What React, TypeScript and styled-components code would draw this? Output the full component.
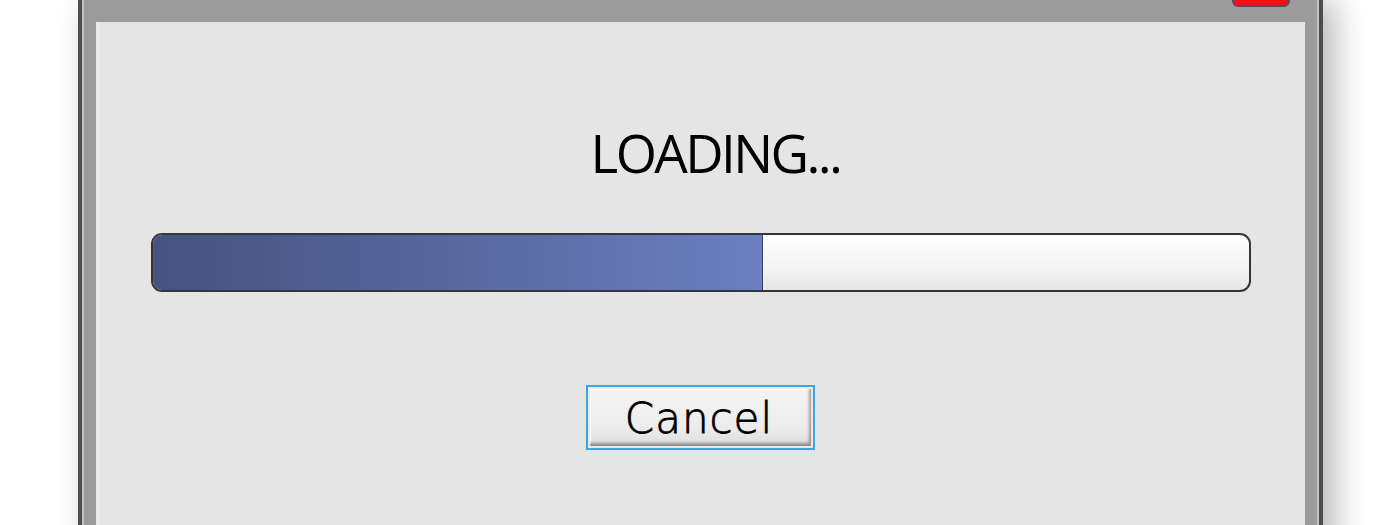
import React from "react";
import styled, { createGlobalStyle } from "styled-components";

const Global = createGlobalStyle`
  html, body { margin: 0; padding: 0; background: #ffffff; }
  body { width: 1400px; height: 525px; overflow: hidden; }
`;

const Page = styled.div`
  display: flex;
  padding-left: 78px;
  height: 525px;
  overflow: hidden;
`;

const Window = styled.div`
  position: relative;
  width: 1245px;
  height: 560px;
  box-sizing: border-box;
  background: #9b9b9b;
  border: 4px solid #4d4d4d;
  border-top: none;
  padding: 0 14px;
  display: flex;
  flex-direction: column;
  box-shadow: inset 2px 0 0 #c4c4c4, inset -2px 0 0 #c4c4c4, 12px 0 30px rgba(0, 0, 0, 0.28);
`;

const TitleBar = styled.div`
  height: 22px;
  flex: none;
  display: flex;
  justify-content: flex-end;
  align-items: flex-start;
  padding-right: 15px;
`;

const CloseButton = styled.div`
  width: 58px;
  height: 12px;
  margin-top: -5px;
  box-sizing: border-box;
  background: #ee1212;
  border: 2px solid #4f5158;
  border-radius: 0 0 6px 6px;
`;

const Content = styled.div`
  flex: 1;
  background: #e5e5e5;
  box-shadow: inset 4px 0 0 #ebebeb;
  display: flex;
  flex-direction: column;
  align-items: center;
`;

const Title = styled.div`
  margin-top: 104px;
  padding-left: 30px;
  font-family: "Open Sans", sans-serif;
  font-size: 53px;
  letter-spacing: -2.6px;
  line-height: 1;
  color: #000;
`;

const Track = styled.div`
  margin-top: 54px;
  width: 1100px;
  height: 59px;
  box-sizing: border-box;
  border: 2px solid #363636;
  border-radius: 11px;
  overflow: hidden;
  display: flex;
  background: linear-gradient(to bottom, #ffffff 0%, #f3f3f3 60%, #e6e6e6 100%);
`;

const Fill = styled.div`
  height: 100%;
  background: linear-gradient(to right, #465280 0%, #56669c 45%, #6b80c0 100%);
  border-right: 1.5px solid #3a4060;
`;

const CancelButton = styled.button`
  margin-top: 93px;
  width: 229px;
  height: 65px;
  box-sizing: border-box;
  border: 2px solid #3aa8de;
  background: #e8e8e8;
  padding: 2px;
  display: flex;
  cursor: pointer;
`;

const CancelFace = styled.span`
  flex: 1;
  display: flex;
  align-items: center;
  justify-content: center;
  background: linear-gradient(to bottom, #f4f4f4 0%, #ececec 70%, #dcdcdc 100%);
  box-shadow: inset -2px -3px 3px rgba(0, 0, 0, 0.35), inset 1px 1px 0 #ffffff;
  font-family: "DejaVu Sans", sans-serif;
  font-weight: 200;
  font-size: 42px;
  letter-spacing: 1px;
  -webkit-text-stroke: 0.8px #000;
  color: #000;
  padding-top: 1px;
  padding-right: 3px;
`;

export default function App() {
  const progress = 0.556;
  return (
    <>
      <Global />
      <Page>
        <Window>
          <TitleBar>
            <CloseButton />
          </TitleBar>
          <Content>
            <Title>LOADING...</Title>
            <Track>
              <Fill style={{ width: `${progress * 100}%` }} />
            </Track>
            <CancelButton>
              <CancelFace>Cancel</CancelFace>
            </CancelButton>
          </Content>
        </Window>
      </Page>
    </>
  );
}
